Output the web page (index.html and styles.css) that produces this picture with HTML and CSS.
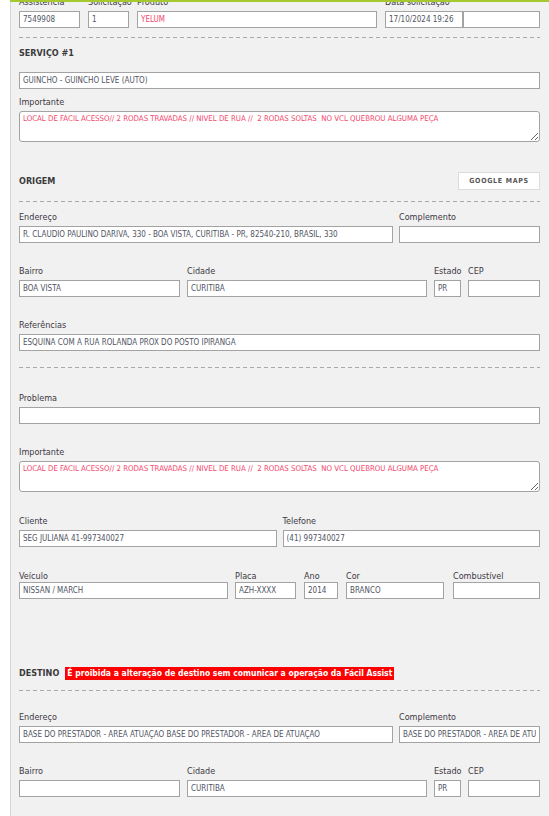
FILE: index.html
```html
<!DOCTYPE html>
<html lang="pt-BR">
<head>
<meta charset="utf-8">
<title>Assistência</title>
<link rel="stylesheet" href="styles.css">
</head>
<body>
<div class="topline"></div>
<div class="page">
  <div class="gutter"></div>
  <main class="panel">
    <div class="row r1">
      <div class="field w-ass"><label>Assistencia</label><input class="inp" value="7549908" readonly></div>
      <div class="field w-sol"><label>Solicitaçao</label><input class="inp" value="1" readonly></div>
      <div class="field w-prod"><label>Produto</label><input class="inp red" value="YELUM" readonly></div>
      <div class="pair">
        <div class="field w-data"><label>Data solicitaçao</label><input class="inp" value="17/10/2024 19:26" readonly></div>
        <div class="field w-hora"><label>&nbsp;</label><input class="inp" value="" readonly></div>
      </div>
    </div>

    <div class="dash d1"></div>
    <h3 class="sec s1">SERVIÇO #1</h3>
    <input class="inp full g1" value="GUINCHO - GUINCHO LEVE (AUTO)" readonly>
    <div class="field imp1"><label>Importante</label><textarea class="ta red" readonly>LOCAL DE FACIL ACESSO// 2 RODAS TRAVADAS // NIVEL DE RUA //  2 RODAS SOLTAS  NO VCL QUEBROU ALGUMA PEÇA</textarea></div>

    <div class="sechead h-orig">
      <h3 class="sec">ORIGEM</h3>
      <button class="gmaps" type="button">GOOGLE MAPS</button>
    </div>
    <div class="dash d2"></div>

    <div class="row addr a1">
      <div class="field w-end"><label>Endereço</label><input class="inp" value="R. CLÁUDIO PAULINO DARIVA, 330 - BOA VISTA, CURITIBA - PR, 82540-210, BRASIL, 330" readonly></div>
      <div class="field w-comp"><label>Complemento</label><input class="inp" value="" readonly></div>
    </div>
    <div class="row city c1">
      <div class="field w-bai"><label>Bairro</label><input class="inp" value="BOA VISTA" readonly></div>
      <div class="field w-cid"><label>Cidade</label><input class="inp" value="CURITIBA" readonly></div>
      <div class="field w-est"><label>Estado</label><input class="inp" value="PR" readonly></div>
      <div class="field w-cep"><label>CEP</label><input class="inp" value="" readonly></div>
    </div>
    <div class="field ref"><label>Referências</label><input class="inp" value="ESQUINA COM A RUA ROLANDA PROX DO POSTO IPIRANGA" readonly></div>

    <div class="dash d3"></div>

    <div class="field prob"><label>Problema</label><input class="inp" value="" readonly></div>
    <div class="field imp2"><label>Importante</label><textarea class="ta red" readonly>LOCAL DE FACIL ACESSO// 2 RODAS TRAVADAS // NIVEL DE RUA //  2 RODAS SOLTAS  NO VCL QUEBROU ALGUMA PEÇA</textarea></div>

    <div class="row cli">
      <div class="field w-cli"><label>Cliente</label><input class="inp" value="SEG JULIANA 41-997340027" readonly></div>
      <div class="field w-tel"><label>Telefone</label><input class="inp" value="(41) 997340027" readonly></div>
    </div>
    <div class="row veic">
      <div class="field w-vei"><label>Veículo</label><input class="inp" value="NISSAN / MARCH" readonly></div>
      <div class="field w-pla"><label>Placa</label><input class="inp" value="AZH-XXXX" readonly></div>
      <div class="field w-ano"><label>Ano</label><input class="inp" value="2014" readonly></div>
      <div class="field w-cor"><label>Cor</label><input class="inp" value="BRANCO" readonly></div>
      <div class="field w-comb"><label>Combustível</label><input class="inp" value="" readonly></div>
    </div>

    <div class="sechead h-dest">
      <h3 class="sec">DESTINO</h3>
      <span class="warn">É proibida a alteração de destino sem comunicar a operação da Fácil Assist</span>
    </div>
    <div class="dash d4"></div>

    <div class="row addr a2">
      <div class="field w-end"><label>Endereço</label><input class="inp" value="BASE DO PRESTADOR - AREA ATUAÇÃO BASE DO PRESTADOR - ÁREA DE ATUAÇÃO" readonly></div>
      <div class="field w-comp"><label>Complemento</label><input class="inp" value="BASE DO PRESTADOR - ÁREA DE ATUAÇÃO" readonly></div>
    </div>
    <div class="row city c2">
      <div class="field w-bai"><label>Bairro</label><input class="inp" value="" readonly></div>
      <div class="field w-cid"><label>Cidade</label><input class="inp" value="CURITIBA" readonly></div>
      <div class="field w-est"><label>Estado</label><input class="inp" value="PR" readonly></div>
      <div class="field w-cep"><label>CEP</label><input class="inp" value="" readonly></div>
    </div>
  </main>
</div>
</body>
</html>
```

FILE: styles.css
```css
* { box-sizing: border-box; }
html, body { margin: 0; padding: 0; background: #fff; }
body {
  font-family: "DejaVu Sans Condensed", "DejaVu Sans", sans-serif;
  font-stretch: condensed;
  color: #3a3a3a;
  overflow: hidden;
}
.topline {
  position: fixed;
  top: 0; left: 10px; right: 0;
  height: 2px;
  background: #a6c930;
  z-index: 5;
}
.page { display: flex; min-height: 100vh; }
.gutter { width: 10px; flex: none; background: #fff; }
.panel {
  flex: 1;
  background: #f1f1f1;
  border-left: 1px solid #d6d6d6;
  padding: 0 9px 60px 8px;
  display: flex;
  flex-direction: column;
}
.row { display: flex; }
.field { display: flex; flex-direction: column; }
label {
  display: block;
  height: 12px;
  line-height: 12px;
  font-size: 9px;
  margin-bottom: 3px;
  white-space: nowrap;
  color: #3d3844;
}
.inp {
  display: block;
  width: 100%;
  height: 17px;
  margin: 0;
  border: 1px solid #a3a3a3;
  border-radius: 0;
  background: #fff;
  padding: 0 3px;
  font-family: inherit;
  font-stretch: condensed;
  font-size: 8px;
  color: #505563;
  outline: none;
}
.red { color: #f2476d; }
.ta {
  display: block;
  width: 100%;
  height: 31px;
  margin: 0;
  border: 1px solid #a3a3a3;
  border-radius: 3px;
  background: #fff;
  padding: 1px 3px;
  font-family: inherit;
  font-stretch: condensed;
  font-size: 7.8px;
  line-height: 11px;
  resize: vertical;
  outline: none;
}
.dash {
  height: 1px;
  background: repeating-linear-gradient(to right, #a9a9a9 0 4px, transparent 4px 7px);
}
.sec {
  margin: 0;
  font-size: 9px;
  line-height: 12px;
  font-weight: bold;
  color: #3a3a3a;
}
.sechead { display: flex; align-items: center; height: 18px; }
.h-orig { justify-content: space-between; margin-top: 30px; }
.gmaps {
  width: 82px;
  height: 18px;
  background: #fff;
  border: 1px solid #dcdcdc;
  font-family: inherit;
  font-stretch: condensed;
  font-size: 7px;
  font-weight: bold;
  letter-spacing: 0.7px;
  color: #555;
  padding: 0;
}
.warn {
  margin-left: 6px;
  background: #ff0000;
  color: #fff;
  font-weight: bold;
  font-size: 8.5px;
  line-height: 13px;
  padding: 0 2px 0 2px;
  white-space: nowrap;
}

/* vertical rhythm */
.r1 { margin-top: -4px; }
.d1 { margin-top: 9px; }
.s1 { margin-top: 9px; }
.g1 { margin-top: 13px; }
.imp1 { margin-top: 7px; }
.d2 { margin-top: 11px; }
.a1 { margin-top: 9px; }
.c1 { margin-top: 22px; }
.ref { margin-top: 22px; }
.d3 { margin-top: 16px; }
.prob { margin-top: 24px; }
.imp2 { margin-top: 22px; }
.cli { margin-top: 23px; }
.veic { margin-top: 23px; }
.veic label { margin-bottom: 0; }
.h-dest { margin-top: 65px; }
.d4 { margin-top: 8px; }
.a2 { margin-top: 20px; }
.c2 { margin-top: 22px; }

/* widths */
.r1 { gap: 8px; }
.w-ass { width: 61px; }
.w-sol { width: 41px; }
.w-prod { width: 240px; }
.pair { display: flex; flex: 1; }
.w-data { width: 78px; }
.w-hora { flex: 1; }

.addr { gap: 6px; }
.w-end { width: 374px; }
.w-comp { flex: 1; }

.city { gap: 7px; }
.w-bai { width: 161px; }
.w-cid { width: 240px; }
.w-est { width: 27px; }
.w-cep { flex: 1; }

.cli { gap: 6px; }
.w-cli { flex: 1; }
.w-tel { flex: 1; }

.veic { gap: 8px; }
.w-vei { width: 209px; margin-right: -1px; }
.w-pla { width: 61px; }
.w-ano { width: 34px; }
.w-cor { width: 98px; margin-right: 1px; }
.w-comb { flex: 1; }
```
